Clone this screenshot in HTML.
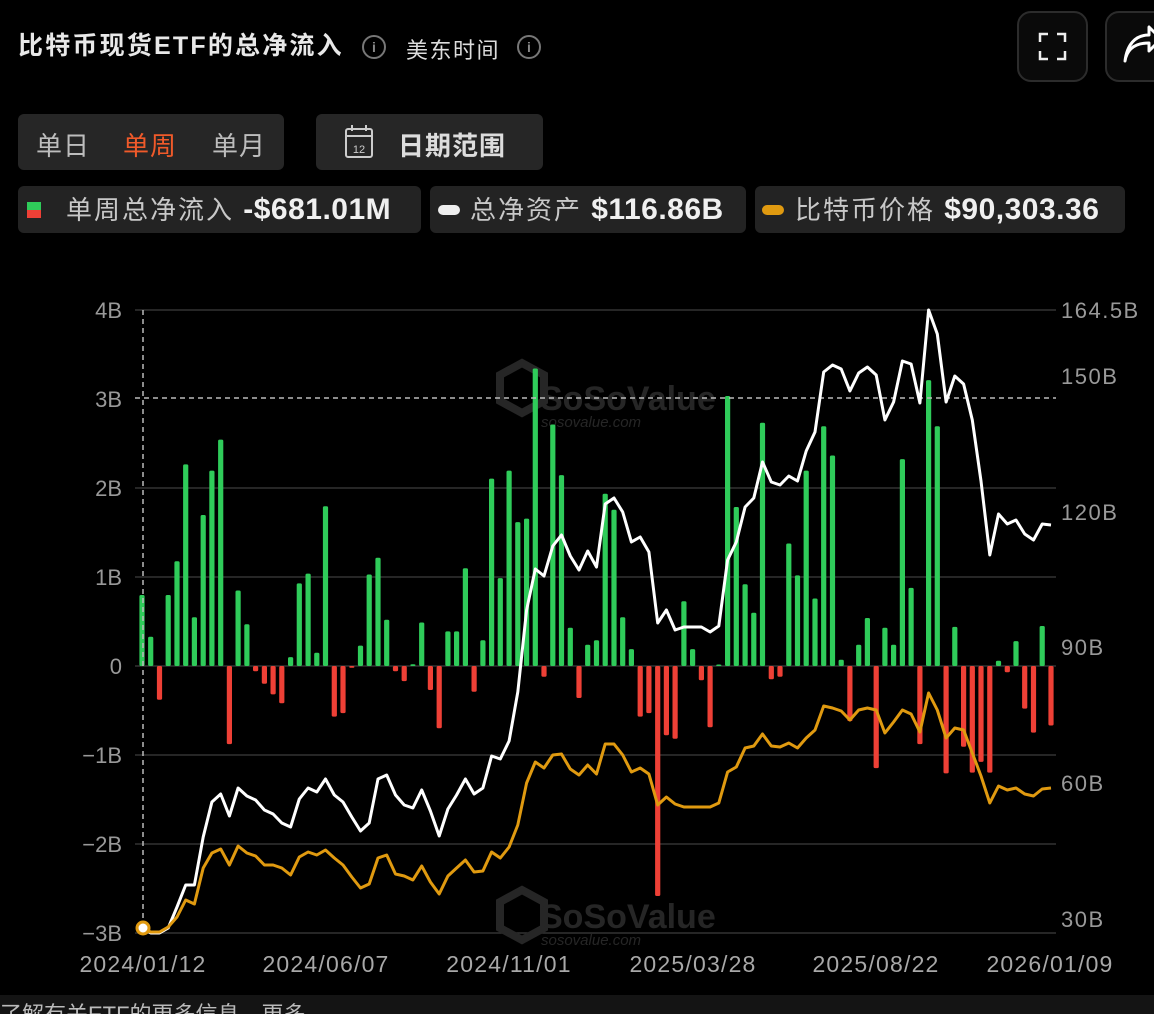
<!DOCTYPE html>
<html><head><meta charset="utf-8"><style>
*{margin:0;padding:0;box-sizing:border-box}
body{width:1154px;height:1014px;background:#000;overflow:hidden;font-family:"Liberation Sans","Noto Sans CJK SC",sans-serif;color:#e6e6e6;position:relative}
.abs{position:absolute}
.title{left:18px;top:31px;font-size:25px;font-weight:bold;color:#e8e8e8;letter-spacing:2.2px;line-height:30px}
.info{width:24px;height:24px;border:2px solid #777;border-radius:50%;color:#888;font-size:14px;text-align:center;line-height:20px;font-weight:bold}
.btn{border:2px solid #2c2c2c;border-radius:14px;background:#0a0a0a}
.box{background:#262626;border-radius:6px}
.tab{font-size:26px;color:#bdbdbd;top:126px;letter-spacing:1px}
.leg{top:186px;height:47px;background:#232323;border-radius:6px;font-size:26px;line-height:47px;white-space:nowrap;color:#c8c8c8;letter-spacing:2px}
.leg b{color:#f0f0f0;font-size:30px;letter-spacing:0.5px}
</style></head><body>
<div class="abs title">比特币现货ETF的总净流入</div>
<div class="abs info" style="left:362px;top:35px">i</div>
<div class="abs" style="left:406px;top:33px;font-size:22px;color:#ddd;letter-spacing:1.5px">美东时间</div>
<div class="abs info" style="left:517px;top:35px">i</div>
<div class="abs btn" style="left:1017px;top:11px;width:71px;height:71px">
<svg width="71" height="71" style="position:absolute;left:-2px;top:-2px"><path d="M23 31v-8h8M40 23h8v8M48 40v8h-8M31 48h-8v-8" fill="none" stroke="#eee" stroke-width="2.5"/></svg></div>
<div class="abs btn" style="left:1105px;top:11px;width:71px;height:71px">
<svg width="60" height="71" style="position:absolute;left:-2px;top:-2px"><path d="M20 50c2-12 10-18 24-18v8l12-12-12-12v8c-14 0-22 10-24 26z" fill="none" stroke="#fff" stroke-width="3" stroke-linejoin="round"/></svg></div>
<div class="abs box" style="left:18px;top:114px;width:266px;height:56px"></div>
<div class="abs tab" style="left:36px">单日</div>
<div class="abs tab" style="left:123px;color:#f05a2a">单周</div>
<div class="abs tab" style="left:212px">单月</div>
<div class="abs box" style="left:316px;top:114px;width:227px;height:56px"></div>
<svg class="abs" style="left:343px;top:124px" width="34" height="36"><rect x="3" y="5" width="26" height="28" rx="2" fill="none" stroke="#ccc" stroke-width="2"/><line x1="3" y1="12" x2="29" y2="12" stroke="#ccc" stroke-width="2"/><line x1="9" y1="1" x2="9" y2="7" stroke="#ccc" stroke-width="2"/><line x1="23" y1="1" x2="23" y2="7" stroke="#ccc" stroke-width="2"/><text x="16" y="29" font-size="11" fill="#ccc" text-anchor="middle" font-family="Liberation Sans">12</text></svg>
<div class="abs tab" style="left:398px;color:#ddd;font-weight:bold">日期范围</div>
<div class="abs leg" style="left:18px;width:403px"><span style="position:absolute;left:9px;top:16px;width:14px;height:8px;background:#2fcc5a"></span><span style="position:absolute;left:9px;top:24px;width:14px;height:8px;background:#ee4036"></span><span style="padding-left:48px">单周总净流入 <b>-$681.01M</b></span></div>
<div class="abs leg" style="left:430px;width:316px"><span style="position:absolute;left:8px;top:19px;width:22px;height:10px;border-radius:5px;background:#eee"></span><span style="padding-left:40px">总净资产 <b>$116.86B</b></span></div>
<div class="abs leg" style="left:755px;width:370px"><span style="position:absolute;left:7px;top:19px;width:22px;height:10px;border-radius:5px;background:#e09a10"></span><span style="padding-left:40px">比特币价格 <b>$90,303.36</b></span></div>

<svg class="abs" style="left:0;top:280px" width="1154" height="715" id="ch">
<g stroke="#333" stroke-width="1.5">
<line x1="135" y1="30" x2="1056" y2="30"/><line x1="135" y1="208" x2="1056" y2="208"/><line x1="135" y1="297" x2="1056" y2="297"/><line x1="135" y1="386" x2="1056" y2="386"/><line x1="135" y1="475" x2="1056" y2="475"/><line x1="135" y1="564" x2="1056" y2="564"/><line x1="135" y1="653" x2="1056" y2="653"/>
</g>
<g font-family="Liberation Sans" font-size="22" fill="#999" text-anchor="end">
<text x="122" y="38">4B</text><text x="122" y="127">3B</text><text x="122" y="216">2B</text><text x="122" y="305">1B</text><text x="122" y="394">0</text><text x="122" y="483">−1B</text><text x="122" y="572">−2B</text><text x="122" y="661">−3B</text>
</g>
<g font-family="Liberation Sans" font-size="22" fill="#999" letter-spacing="1.5">
<text x="1061" y="38">164.5B</text><text x="1061" y="104">150B</text><text x="1061" y="240">120B</text><text x="1061" y="375">90B</text><text x="1061" y="511">60B</text><text x="1061" y="647">30B</text>
</g>
<g font-family="Liberation Sans" font-size="23" fill="#a8a8a8" text-anchor="middle" letter-spacing="1.2">
<text x="143" y="692">2024/01/12</text><text x="326" y="692">2024/06/07</text><text x="509" y="692">2024/11/01</text><text x="693" y="692">2025/03/28</text><text x="876" y="692">2025/08/22</text><text x="1050" y="692">2026/01/09</text>
</g>
<g fill="#262626" font-family="Liberation Sans" font-weight="bold">
<path d="M500 95l22 -12 22 12v26l-22 12-22-12z" fill="none" stroke="#262626" stroke-width="8"/>
<text x="540" y="130" font-size="34">SoSoValue</text><text x="541" y="147" font-size="15" font-weight="normal" font-style="italic">sosovalue.com</text>
<path d="M500 622l22 -12 22 12v26l-22 12-22-12z" fill="none" stroke="#262626" stroke-width="8"/>
<text x="540" y="648" font-size="34">SoSoValue</text><text x="541" y="665" font-size="15" font-weight="normal" font-style="italic">sosovalue.com</text>
</g>
<g id="bars"></g>
<line x1="143" y1="30" x2="143" y2="652" stroke="#bbb" stroke-width="1.5" stroke-dasharray="5,4"/>
<line x1="135" y1="118" x2="1056" y2="118" stroke="#bbb" stroke-width="1.5" stroke-dasharray="5,4"/>
<polyline id="wl" fill="none" stroke="#fff" stroke-width="3" stroke-linejoin="round"/>
<polyline id="ol" fill="none" stroke="#e09a10" stroke-width="3" stroke-linejoin="round"/>
<circle cx="143" cy="648" r="6" fill="#fff" stroke="#e09a10" stroke-width="3"/>
</svg>
<div class="abs" style="left:0;top:995px;width:1154px;height:19px;background:#141414;overflow:hidden"><div style="position:absolute;left:0;top:9px;font-size:22px;color:#bbb;line-height:22px">了解有关ETF的更多信息，更多</div></div>
<script>
var v=[0.8,0.33,-0.38,0.8,1.18,2.27,0.55,1.7,2.2,2.55,-0.88,0.85,0.47,-0.06,-0.2,-0.32,-0.42,0.1,0.93,1.04,0.15,1.8,-0.57,-0.53,-0.02,0.23,1.03,1.22,0.52,-0.06,-0.17,0.02,0.49,-0.27,-0.7,0.39,0.39,1.1,-0.29,0.29,2.11,0.99,2.2,1.62,1.66,3.35,-0.12,2.72,2.15,0.43,-0.36,0.24,0.29,1.94,1.76,0.55,0.19,-0.57,-0.53,-2.59,-0.78,-0.82,0.73,0.19,-0.16,-0.69,0.01,3.04,1.79,0.92,0.6,2.74,-0.15,-0.12,1.38,1.02,2.2,0.76,2.7,2.37,0.07,-0.62,0.24,0.54,-1.15,0.43,0.24,2.33,0.88,-0.88,3.22,2.7,-1.21,0.44,-0.91,-1.2,-1.08,-1.2,0.06,-0.07,0.28,-0.48,-0.75,0.45,-0.67];
var w=[928,933,933,928,907,885,885,837,802,794,816,788,796,800,810,814,823,827,799,788,792,779,795,802,817,831,823,779,775,795,805,808,790,811,836,809,795,779,794,788,756,759,741,692,610,569,576,546,535,556,570,551,567,504,498,512,542,537,552,623,610,630,627,627,627,632,626,560,542,507,498,462,482,485,476,481,451,432,372,365,369,391,373,367,375,420,402,361,364,403,310,334,402,376,384,420,481,555,514,524,520,534,540,524,525];
var o=[928,932,932,927,917,900,904,868,853,849,865,846,853,856,865,865,868,875,857,852,855,850,858,865,877,888,884,858,855,874,876,880,866,882,894,876,868,860,872,871,852,858,847,825,783,762,768,755,754,769,775,765,774,744,744,755,772,768,774,805,797,804,807,807,807,807,803,772,767,748,746,734,746,747,743,748,738,730,706,708,711,720,710,708,710,733,722,710,714,732,693,710,738,728,730,753,776,803,786,790,788,794,796,789,788];
var g=document.getElementById('bars'),s='',pw='',po='';
for(var i=0;i<105;i++){var x=142+i*8.74,h=Math.max(Math.abs(v[i])*88.8,1.5),y=v[i]>=0?386-h:386;
s+='<rect x="'+(x-2.6).toFixed(1)+'" y="'+y.toFixed(1)+'" width="5.2" height="'+h.toFixed(1)+'" rx="1.5" fill="'+(v[i]>=0?'#2fcc5a':'#ee4036')+'"/>';
pw+=x.toFixed(1)+','+(w[i]-280)+' ';po+=x.toFixed(1)+','+(o[i]-280)+' ';}
g.innerHTML=s;document.getElementById('wl').setAttribute('points',pw);document.getElementById('ol').setAttribute('points',po);
</script>
</body></html>
